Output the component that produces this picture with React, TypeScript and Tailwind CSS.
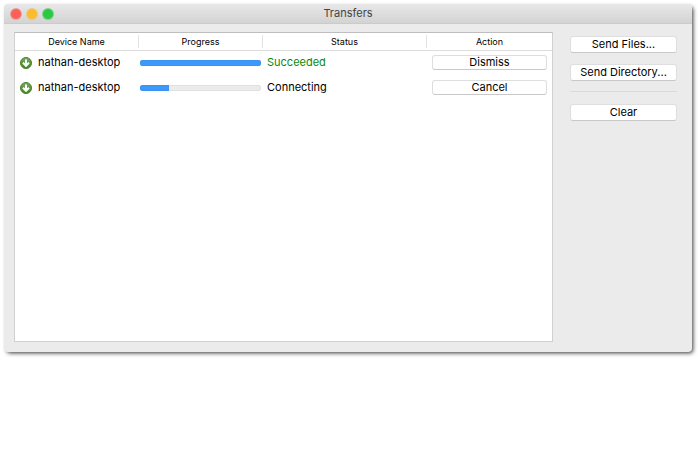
import React from 'react';
import clsx from 'clsx';

type Transfer = {
  id: number;
  device: string;
  progress: number;
  status: string;
  succeeded: boolean;
  action: string;
};

const transfers: Transfer[] = [
  { id: 1, device: 'nathan-desktop', progress: 100, status: 'Succeeded', succeeded: true, action: 'Dismiss' },
  { id: 2, device: 'nathan-desktop', progress: 24, status: 'Connecting', succeeded: false, action: 'Cancel' },
];

const columns = ['Device Name', 'Progress', 'Status', 'Action'];

const DownloadIcon = () => (
  <svg viewBox="0 0 24 24" className="size-3 shrink-0" aria-hidden="true">
    <defs>
      <linearGradient id="download-fill" x1="0" y1="0" x2="0" y2="1">
        <stop offset="0" stopColor="#7aa95c" />
        <stop offset="1" stopColor="#3f8a1c" />
      </linearGradient>
    </defs>
    <circle cx="12" cy="12" r="11" fill="url(#download-fill)" stroke="#4a7f33" strokeWidth="2" />
    <path d="M12 5v12M6 11.500l6 6 6-6" fill="none" stroke="#fff" strokeWidth="4" />
  </svg>
);

type PushButtonProps = {
  children: React.ReactNode;
  className?: string;
};

const PushButton = ({ children, className }: PushButtonProps) => (
  <button
    type="button"
    className={clsx(
      'flex w-full items-center justify-center rounded-[3px] border border-[#dedede] border-b-[#c8c8c8] bg-white text-[11px] leading-none text-black',
      className,
    )}
  >
    {children}
  </button>
);

const ProgressBar = ({ value, label }: { value: number; label: string }) => (
  <div
    role="progressbar"
    aria-label={label}
    aria-valuenow={value}
    aria-valuemin={0}
    aria-valuemax={100}
    className="h-1.5 overflow-hidden rounded-full bg-[#ebebeb] inset-ring inset-ring-[#e0e0e0]"
  >
    <div className="h-full bg-[#3b99fc] inset-ring inset-ring-[#3d93f2]" style={{ width: `${value}%` }} />
  </div>
);

const TitleBar = () => (
  <header className="grid h-5 grid-cols-[1fr_auto_1fr] items-center border-b border-[#cbcbcb] bg-linear-to-b from-[#e8e8e8] to-[#d3d3d3] px-[7px]">
    <div className="flex gap-1.5">
      <button type="button" aria-label="Close" className="size-[10px] rounded-full bg-[#fc6058] ring ring-[#f0655c]/50" />
      <button type="button" aria-label="Minimize" className="size-[10px] rounded-full bg-[#fdbc2e] ring ring-[#efb43c]/50" />
      <button type="button" aria-label="Zoom" className="size-[10px] rounded-full bg-[#28ca42] ring ring-[#2dbb42]/50" />
    </div>
    <h1 className="text-[11px] leading-none text-[#444]">Transfers</h1>
  </header>
);

const TransferTable = () => (
  <table className="w-full table-fixed border-collapse text-left">
    <colgroup>
      <col className="w-[124px]" />
      <col className="w-[124px]" />
      <col />
      <col className="w-[125px]" />
    </colgroup>
    <thead>
      <tr className="h-[17px] border-b border-[#dcdcdc]">
        {columns.map((column, index) => (
          <th key={column} scope="col" className="p-0 text-center text-[9px] font-normal">
            <div
              className={clsx(
                'h-[13px] leading-[13px]',
                index < columns.length - 1 && 'border-r border-[#e2e2e2]',
              )}
            >
              {column}
            </div>
          </th>
        ))}
      </tr>
    </thead>
    <tbody>
      {transfers.map((transfer) => (
        <tr key={transfer.id} className="h-[25px] text-[11px] leading-none">
          <td className="py-0 pr-1 pl-[5px]">
            <div className="flex items-center gap-1.5 whitespace-nowrap">
              <DownloadIcon />
              {transfer.device}
            </div>
          </td>
          <td className="py-0 pr-0.5 pl-px">
            <ProgressBar value={transfer.progress} label={`${transfer.device} progress`} />
          </td>
          <td className={clsx('px-1 py-0', transfer.succeeded && 'text-[#098a09]')}>{transfer.status}</td>
          <td className="px-[5px] py-0">
            <PushButton className="h-[15px]">{transfer.action}</PushButton>
          </td>
        </tr>
      ))}
    </tbody>
  </table>
);

const App = () => {
  return (
    <div className="bg-white pt-1 pr-2 pb-6 pl-1 font-['Inter','Liberation_Sans',sans-serif] text-black">
      <div className="overflow-hidden rounded-[4px] bg-[#ebebeb] shadow-[2px_2px_4px_-1px_rgba(0,0,0,0.8)]">
        <TitleBar />
        <main className="flex gap-[17px] pt-2 pr-[15px] pb-2.5 pl-2.5">
          <section className="min-h-[310px] min-w-0 flex-1 border border-[#d0d0d0] border-t-[#bebebe] bg-white">
            <TransferTable />
          </section>
          <aside className="flex w-[107px] shrink-0 flex-col pt-1">
            <div className="flex flex-col gap-[11px]">
              <PushButton className="h-[17px]">Send Files...</PushButton>
              <PushButton className="h-[17px]">Send Directory...</PushButton>
            </div>
            <hr className="mt-2.5 mb-3 border-t border-[#dadada]" />
            <PushButton className="h-[17px]">Clear</PushButton>
          </aside>
        </main>
      </div>
    </div>
  );
};

export default App;
